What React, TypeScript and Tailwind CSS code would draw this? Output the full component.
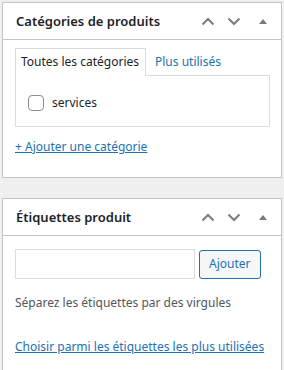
import React from "react";

const Up = () => (
  <svg width="14" height="9" viewBox="0 0 14 9" fill="none">
    <path d="M1.5 7.5L7 2L12.5 7.5" stroke="#787c82" strokeWidth="2" />
  </svg>
);
const Down = () => (
  <svg width="14" height="9" viewBox="0 0 14 9" fill="none">
    <path d="M1.5 1.5L7 7L12.5 1.5" stroke="#787c82" strokeWidth="2" />
  </svg>
);
const Tri = () => (
  <svg width="8" height="5" viewBox="0 0 8 5">
    <path d="M0 5L4 0L8 5Z" fill="#787c82" />
  </svg>
);

function Header({ title }: { title: string }) {
  return (
    <div className="flex h-[37px] items-center border-b border-[#c3c4c7] pl-[13px] pr-[12px]">
      <h2 className="flex-1 text-[13px] font-semibold leading-[18px] text-[#1d2327]">{title}</h2>
      <div className="flex items-center">
        <span className="flex w-[26px] justify-center"><Up /></span>
        <span className="flex w-[26px] justify-center"><Down /></span>
        <span className="ml-[10px] flex w-[12px] justify-center"><Tri /></span>
      </div>
    </div>
  );
}

export default function App() {
  return (
    <div
      className="min-h-[370px] bg-[#f0f0f1] px-[2px] pt-[2px] text-[12px] leading-[18px] text-[#3c434a]"
      style={{ fontFamily: '"Noto Sans", sans-serif' }}
    >
      <div className="w-[280px] border border-[#c3c4c7] bg-white">
        <Header title="Catégories de produits" />
        <div className="pl-3 pr-[11px] pt-[8px]">
          <div className="flex h-[27px] items-stretch">
            <div className="relative z-10 flex items-center border border-b-0 border-[#dcdcde] bg-white pl-[5px] pr-[6px] text-[#1d2327]">
              <span>Toutes les catégories</span>
              <span className="absolute -bottom-px left-0 right-0 h-px bg-white" />
            </div>
            <div className="flex items-center pl-[9px] text-[#2271b1]">Plus utilisés</div>
          </div>
          <div className="h-[52px] border border-[#dcdcde] pl-[12px] pt-[19px]">
            <label className="flex h-4 items-center gap-[8px] text-[#1d2327]">
              <span className="h-4 w-4 shrink-0 rounded-[4px] border border-[#8c8f94] bg-white" />
              <span>services</span>
            </label>
          </div>
          <div className="h-[50px] pt-[11px]">
            <a className="text-[#2271b1] underline" href="#">+ Ajouter une catégorie</a>
          </div>
        </div>
      </div>

      <div className="mt-[20px] w-[280px] border border-[#c3c4c7] bg-white">
        <Header title="Étiquettes produit" />
        <div className="pl-3 pr-[11px] pt-[13px]">
          <div className="flex items-center gap-[4px]">
            <div className="h-[30px] w-[180px] border border-[#dcdcde] bg-white" />
            <button className="h-[29px] rounded-[3px] border border-[#2271b1] bg-[#f6f7f7] px-[9px] text-[#2271b1]">
              Ajouter
            </button>
          </div>
          <p className="mt-[15px] text-[#50575e]">Séparez les étiquettes par des virgules</p>
          <p className="mt-[26px] whitespace-nowrap pb-[20px]">
            <a className="text-[#2271b1] underline" href="#">Choisir parmi les étiquettes les plus utilisées</a>
          </p>
        </div>
      </div>
    </div>
  );
}
